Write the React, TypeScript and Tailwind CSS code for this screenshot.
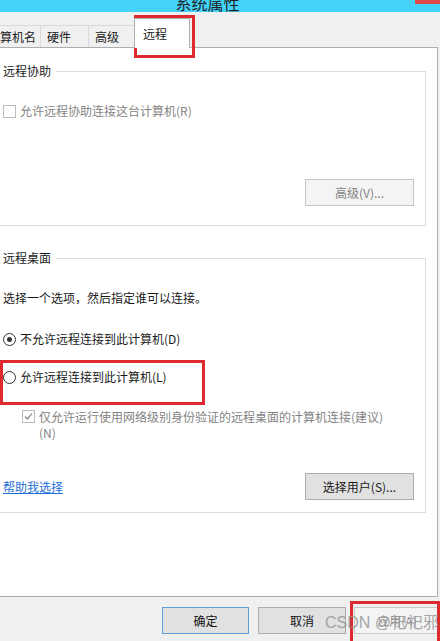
import React from 'react'

const Radio = ({ checked }: { checked?: boolean }) => (
  <span className="flex h-[13px] w-[13px] shrink-0 items-center justify-center rounded-full border border-[#333333] bg-white">
    {checked && <span className="h-[5px] w-[5px] rounded-full bg-[#333333]" />}
  </span>
)

const Check = ({ checked }: { checked?: boolean }) => (
  <span className="flex h-[13px] w-[13px] shrink-0 items-center justify-center border border-[#bcbcbc] bg-white">
    {checked && (
      <svg width="9" height="9" viewBox="0 0 9 9">
        <path d="M1 4.6 L3.4 7 L8 1.6" fill="none" stroke="#8c8c8c" strokeWidth="1.4" />
      </svg>
    )}
  </span>
)

function App() {
  return (
    <div className="relative h-[641px] w-[440px] overflow-hidden bg-[#f0f0f0] font-[family-name:'Noto_Sans_CJK_SC',sans-serif] text-[12px] leading-[16px] text-[#1a1a1a]">
      {/* title bar */}
      <div className="flex h-[12px] overflow-hidden bg-[#43d3f9]">
        <div className="-mt-[5px] flex-1 text-center text-[16px] leading-[16px] text-[#1f1f1f]">系统属性</div>
        <div className="h-[4px] w-[25px] bg-[#e04a4a]" />
      </div>

      {/* tabs */}
      <div className="flex h-[35px] items-end">
        <div className="flex h-[22px] w-[41px] items-center overflow-hidden whitespace-nowrap border-t border-r border-[#d9d9d9]">算机名</div>
        <div className="flex h-[22px] w-[48px] items-center border-t border-r border-[#d9d9d9] pl-[6px]">硬件</div>
        <div className="flex h-[22px] w-[45px] items-center border-t border-[#d9d9d9] pl-[6px]">高级</div>
        <div className="relative z-10 -mb-px flex h-[30px] w-[56px] items-center border-x border-t border-[#adadad] bg-white pl-[8px]">远程</div>
      </div>

      {/* panel */}
      <div className="h-[550px] w-[438px] border-y border-r border-[#adadad] bg-white">
        <fieldset className="-ml-[3px] mt-[15px] w-[429px] border border-[#d5dde2] pb-[19px] pl-[2px] pr-[11px]">
          <legend className="pl-[3px] pr-[5px] leading-[16px]">远程协助</legend>
          <div className="ml-[3px] mt-[24px] flex items-center gap-[4px] text-[#838383]">
            <Check />
            允许远程协助连接这台计算机(R)
          </div>
          <div className="mt-[60px] flex justify-end">
            <button className="flex h-[27px] w-[109px] items-center justify-center border border-[#c6c6c6] bg-[#f4f4f4] text-[#838383]">高级(V)...</button>
          </div>
        </fieldset>

        <fieldset className="-ml-[3px] mt-[24px] w-[429px] border border-[#d5dde2] pb-[12px] pl-[2px] pr-[11px]">
          <legend className="pl-[3px] pr-[5px] leading-[16px]">远程桌面</legend>
          <div className="ml-[3px] mt-[24px]">选择一个选项，然后指定谁可以连接。</div>
          <div className="ml-[3px] mt-[25px] flex items-center gap-[4px]">
            <Radio checked />
            不允许远程连接到此计算机(D)
          </div>
          <div className="ml-[3px] mt-[22px] flex items-center gap-[4px]">
            <Radio />
            允许远程连接到此计算机(L)
          </div>
          <div className="ml-[22px] mt-[24px] flex items-start gap-[4px] leading-[16px] text-[#838383]">
            <span className="mt-[1px]">
              <Check checked />
            </span>
            <span>
              仅允许运行使用网络级别身份验证的远程桌面的计算机连接(建议)
              <br />
              (N)
            </span>
          </div>
          <div className="ml-[3px] mt-[32px] flex items-center justify-between">
            <a className="text-[#1e6fd9] underline">帮助我选择</a>
            <button className="flex h-[27px] w-[109px] items-center justify-center border border-[#adadad] bg-[#e1e1e1]">选择用户(S)...</button>
          </div>
        </fieldset>
      </div>

      {/* footer */}
      <div className="flex h-[44px] items-start pl-[162px] pt-[10px]">
        <button className="flex h-[27px] w-[87px] items-center justify-center border border-[#5e9fd8] bg-[#e1e1e1] text-[#111111]">确定</button>
        <button className="ml-[9px] flex h-[27px] w-[88px] items-center justify-center border border-[#adadad] bg-[#e1e1e1] text-[#111111]">取消</button>
        <button className="ml-[8px] flex h-[27px] w-[86px] shrink-0 items-center justify-center border border-[#c9c9c9] bg-[#f4f4f4] text-[#9a9a9a]">应用(A)</button>
      </div>

      {/* annotations */}
      <div className="absolute left-[134px] top-[15px] h-[43px] w-[61px] border-[3px] border-[#dc2a31]" />
      <div className="absolute left-0 top-[360px] h-[45px] w-[205px] border-[3px] border-[#dc2a31]" />
      <div className="absolute left-[350px] top-[601px] h-[45px] w-[90px] border-[3px] border-[#dc2a31]" />
      <div className="absolute left-[325px] top-[613px] font-[family-name:'Liberation_Sans','Noto_Sans_CJK_SC',sans-serif] text-[16px] leading-[20px] text-[#8f8f8f]/80">
        CSDN @祀祀邪
      </div>
    </div>
  )
}

export default App
